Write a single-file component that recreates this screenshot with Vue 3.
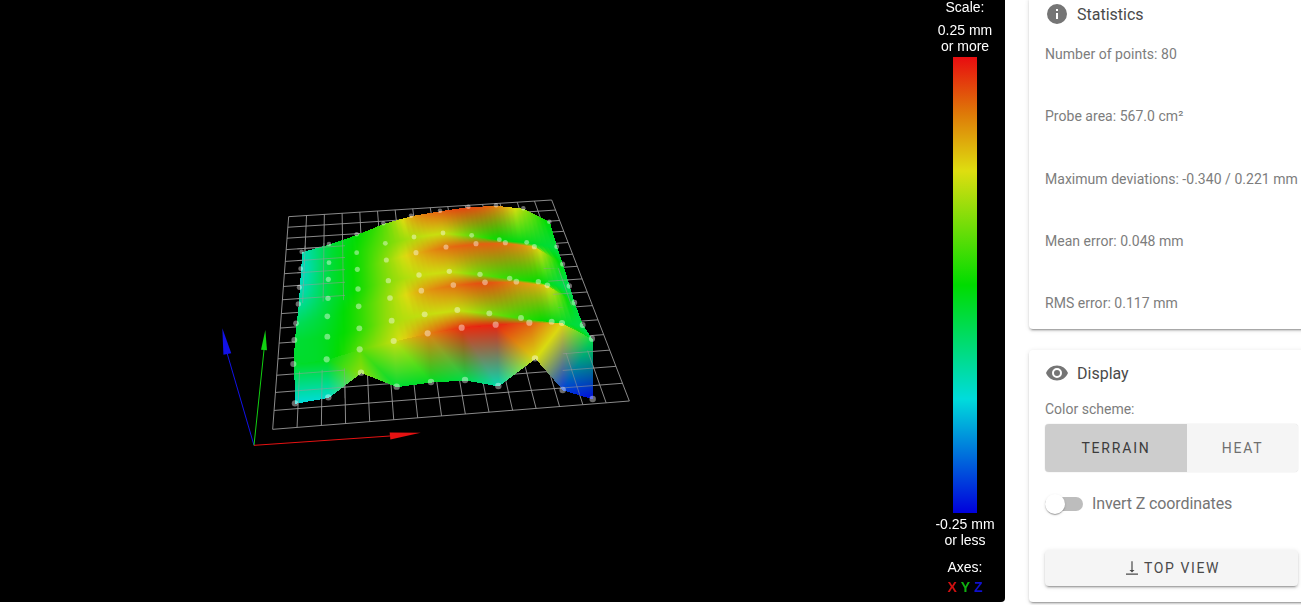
<script setup>
import { onMounted, ref } from 'vue'

const mesh = ref(null)

const stats = [
  'Number of points: 80',
  'Probe area: 567.0 cm²',
  'Maximum deviations: -0.340 / 0.221 mm',
  'Mean error: 0.048 mm',
  'RMS error: 0.117 mm'
]

// probe points as seen on screen, front row first, [x, y, height 0..1]
const rows = [
  [[255,640,.25],[355,622,.27],[453,548,.66],[560,590,.44],[663,576,.46],[765,570,.42],[865,588,.3],[975,505,.74],[1058,600,.07],[1148,627,.01]],
  [[250,522,.45],[350,508,.47],[449,478,.6],[551,453,.72],[653,430,.86],[755,413,.96],[857,404,.97],[958,398,.9],[1056,399,.76],[1146,446,.42]],
  [[253,450,.44],[352,440,.47],[448,415,.55],[545,392,.68],[644,373,.72],[742,360,.72],[838,370,.64],[933,384,.56],[1025,395,.48],[1118,405,.42]],
  [[258,400,.4],[352,379,.45],[446,349,.55],[540,324,.68],[634,302,.82],[730,285,.88],[825,277,.92],[919,275,.85],[1012,286,.76],[1093,338,.42]],
  [[265,342,.33],[354,325,.43],[444,297,.52],[535,272,.65],[627,255,.72],[718,244,.72],[810,253,.62],[899,265,.55],[985,275,.5],[1078,288,.4]],
  [[268,292,.29],[355,268,.43],[442,238,.52],[529,210,.66],[618,188,.8],[708,171,.88],[798,161,.9],[886,158,.88],[973,170,.78],[1058,222,.46]],
  [[272,236,.28],[357,218,.43],[440,188,.52],[526,160,.62],[612,141,.7],[699,129,.72],[785,136,.6],[868,149,.5],[950,157,.47],[1040,170,.43]],
  [[275,185,.3],[357,162,.43],[440,133,.5],[520,100,.6],[603,77,.82],[690,62,.9],[775,50,.93],[858,46,.86],[940,55,.68],[1018,95,.48]]
]

const ramp = [[0,0,220],[0,220,220],[0,220,0],[222,222,16],[232,12,16]]

const colorAt = (t) => {
  const p = Math.max(0, Math.min(t * 4, 3.999))
  const i = Math.floor(p)
  return ramp[i].map((v, k) => v + (ramp[i + 1][k] - v) * (p - i))
}

const px = ([x, y]) => [210 + x / 3, 190 + y / 3]

// point on a row between two columns, the height eased so no facets show
const along = (row, c, u) => {
  const p0 = row[Math.max(c - 1, 0)][2]
  const p1 = row[c][2]
  const p2 = row[c + 1][2]
  const p3 = row[Math.min(c + 2, row.length - 1)][2]
  const t = 0.5 * (2 * p1 + (p2 - p0) * u + (2 * p0 - 5 * p1 + 4 * p2 - p3) * u * u + (3 * p1 - p0 - 3 * p2 + p3) * u * u * u)
  return [row[c][0] + (row[c + 1][0] - row[c][0]) * u, row[c][1] + (row[c + 1][1] - row[c][1]) * u, t]
}

const fillTriangle = (img, a, b, c) => {
  const [ax, ay] = px(a)
  const [bx, by] = px(b)
  const [cx, cy] = px(c)
  const ca = colorAt(a[2])
  const cb = colorAt(b[2])
  const cc = colorAt(c[2])
  const area = (bx - ax) * (cy - ay) - (cx - ax) * (by - ay)
  if (!area) return
  for (let y = Math.floor(Math.min(ay, by, cy)); y <= Math.ceil(Math.max(ay, by, cy)); y++) {
    for (let x = Math.floor(Math.min(ax, bx, cx)); x <= Math.ceil(Math.max(ax, bx, cx)); x++) {
      const w1 = ((x - ax) * (cy - ay) - (cx - ax) * (y - ay)) / area
      const w2 = ((bx - ax) * (y - ay) - (x - ax) * (by - ay)) / area
      const w0 = 1 - w1 - w2
      if (w0 < 0 || w1 < 0 || w2 < 0) continue
      const o = (y * img.width + x) * 4
      for (let k = 0; k < 3; k++) img.data[o + k] = ca[k] * w0 + cb[k] * w1 + cc[k] * w2
      img.data[o + 3] = 255
    }
  }
}

// maps the unit square onto the grid's four corners
const plane = (q) => {
  const [[x0, y0], [x1, y1], [x2, y2], [x3, y3]] = q
  const sx = x0 - x1 + x2 - x3
  const sy = y0 - y1 + y2 - y3
  const dx1 = x1 - x2
  const dx2 = x3 - x2
  const dy1 = y1 - y2
  const dy2 = y3 - y2
  const den = dx1 * dy2 - dx2 * dy1
  const g = (sx * dy2 - dx2 * sy) / den
  const h = (dx1 * sy - sx * dy1) / den
  return (u, v) => {
    const w = g * u + h * v + 1
    return [
      ((x1 - x0 + g * x1) * u + (x3 - x0 + h * x3) * v + x0) / w,
      ((y1 - y0 + g * y1) * u + (y3 - y0 + h * y3) * v + y0) / w
    ]
  }
}

const drawGrid = (ctx) => {
  const at = plane([[236,80],[1025,30],[1258,633],[188,718]].map(px))
  ctx.strokeStyle = '#9a9a9a'
  ctx.lineWidth = 0.9
  ctx.beginPath()
  for (let i = 0; i <= 15; i++) {
    ctx.moveTo(...at(i / 15, 0))
    ctx.lineTo(...at(i / 15, 1))
    ctx.moveTo(...at(0, i / 15))
    ctx.lineTo(...at(1, i / 15))
  }
  ctx.stroke()
}

const drawAxis = (ctx, color, tip, base, width) => {
  const origin = px([132, 766])
  const t = px(tip)
  const b = px(base)
  const len = Math.hypot(t[0] - b[0], t[1] - b[1])
  const nx = (t[1] - b[1]) / len * width
  const ny = (b[0] - t[0]) / len * width
  ctx.strokeStyle = color
  ctx.fillStyle = color
  ctx.lineWidth = 1
  ctx.beginPath()
  ctx.moveTo(...origin)
  ctx.lineTo(...b)
  ctx.stroke()
  ctx.beginPath()
  ctx.moveTo(...t)
  ctx.lineTo(b[0] + nx, b[1] + ny)
  ctx.lineTo(b[0] - nx, b[1] - ny)
  ctx.fill()
}

onMounted(() => {
  const ctx = mesh.value.getContext('2d')
  const { width, height } = mesh.value
  drawGrid(ctx)

  const img = ctx.createImageData(width, height)
  const steps = 6
  for (let r = rows.length - 2; r >= 0; r--) {
    for (let c = 0; c < 9; c++) {
      if (r === 0) {
        // the front row keeps its hard facets, they fan out from the notch
        const a = rows[0][c]
        const b = rows[0][c + 1]
        const d = rows[1][c]
        const e = rows[1][c + 1]
        if (c >= 7) {
          fillTriangle(img, a, e, d)
          fillTriangle(img, a, b, e)
        } else {
          fillTriangle(img, b, d, a)
          fillTriangle(img, b, e, d)
        }
        continue
      }
      for (let s = 0; s < steps; s++) {
        const a = along(rows[r], c, s / steps)
        const b = along(rows[r], c, (s + 1) / steps)
        const d = along(rows[r + 1], c, s / steps)
        const e = along(rows[r + 1], c, (s + 1) / steps)
        fillTriangle(img, b, d, a)
        fillTriangle(img, b, e, d)
      }
    }
  }
  const layer = document.createElement('canvas')
  layer.width = width
  layer.height = height
  layer.getContext('2d').putImageData(img, 0, 0)
  ctx.filter = 'blur(0.6px)'
  ctx.drawImage(layer, 0, 0)
  ctx.filter = 'none'

  // parts of the grid that stick out above the surface
  const above = [
    [[262,170],[405,150],[405,330],[262,340]],
    [[255,545],[405,535],[405,625],[255,640]],
    [[1058,490],[1150,480],[1150,625],[1058,600]],
    [[1000,235],[1070,235],[1090,345],[1045,355]]
  ]
  ctx.save()
  ctx.beginPath()
  for (const zone of above) {
    zone.map(px).forEach((p, i) => (i ? ctx.lineTo(...p) : ctx.moveTo(...p)))
    ctx.closePath()
  }
  ctx.clip()
  ctx.globalAlpha = 0.6
  drawGrid(ctx)
  ctx.restore()

  rows.forEach((row, r) => {
    ctx.fillStyle = 'rgba(255, 255, 255, 0.42)'
    row.forEach((p) => {
      ctx.beginPath()
      ctx.arc(...px(p), 3.2 - r * 0.13, 0, Math.PI * 2)
      ctx.fill()
    })
  })

  drawAxis(ctx, '#1212e6', [37, 415], [52, 492], 4)
  drawAxis(ctx, '#12d012', [166, 420], [162, 480], 3)
  drawAxis(ctx, '#e61212', [632, 728], [540, 738], 3.5)
})
</script>

<template>
  <div class="page">
    <div class="viewer">
      <canvas ref="mesh" class="mesh" width="1005" height="602"></canvas>
      <div class="legend">
        <div class="legend-title">Scale:</div>
        <div class="legend-label">0.25 mm<br>or more</div>
        <div class="bar"></div>
        <div class="legend-label">-0.25 mm<br>or less</div>
        <div class="axes-title">Axes:</div>
        <div class="axes">
          <span class="x">X</span>
          <span class="y">Y</span>
          <span class="z">Z</span>
        </div>
      </div>
    </div>

    <div class="side">
      <section class="card stats-card">
        <h3 class="card-title">
          <svg class="icon" viewBox="0 0 24 24"><path d="M13,9H11V7H13M13,17H11V11H13M12,2A10,10 0 0,0 2,12A10,10 0 0,0 12,22A10,10 0 0,0 22,12A10,10 0 0,0 12,2Z" /></svg>
          Statistics
        </h3>
        <div class="stats">
          <p v-for="line in stats" :key="line">{{ line }}</p>
        </div>
      </section>

      <section class="card display-card">
        <h3 class="card-title">
          <svg class="icon" viewBox="0 0 24 24"><path d="M12,9A3,3 0 0,0 9,12A3,3 0 0,0 12,15A3,3 0 0,0 15,12A3,3 0 0,0 12,9M12,17A5,5 0 0,1 7,12A5,5 0 0,1 12,7A5,5 0 0,1 17,12A5,5 0 0,1 12,17M12,4.5C7,4.5 2.73,7.61 1,12C2.73,16.39 7,19.5 12,19.5C17,19.5 21.27,16.39 23,12C21.27,7.61 17,4.5 12,4.5Z" /></svg>
          Display
        </h3>
        <div class="body">
          <div class="field-label">Color scheme:</div>
          <div class="toggle">
            <button class="active">Terrain</button>
            <button>Heat</button>
          </div>
          <div class="switch-row">
            <span class="switch"><span class="thumb"></span></span>
            <span class="switch-label">Invert Z coordinates</span>
          </div>
          <button class="top-view">
            <svg viewBox="0 0 24 24"><path d="M12.8,3V14.6H15.4L12,18L8.6,14.6H11.2V3H12.8M4,21V19.4H20V21H4Z" /></svg>
            Top view
          </button>
        </div>
      </section>
    </div>
  </div>
</template>

<style scoped>
.page {
  display: flex;
  align-items: flex-start;
  gap: 24px;
  height: 605px;
  overflow: hidden;
  font-family: Roboto, sans-serif;
}

.viewer {
  position: relative;
  flex: none;
  display: flex;
  justify-content: flex-end;
  width: 1005px;
  height: 602px;
  background: #000;
  border-bottom-right-radius: 4px;
  overflow: hidden;
}

.mesh {
  position: absolute;
  top: 0;
  left: 0;
}

.legend {
  position: relative;
  display: flex;
  flex-direction: column;
  align-items: center;
  width: 70px;
  margin: -1px 5px 0 0;
  color: #fff;
  font: 14px/16px "Liberation Sans", Arial, sans-serif;
  text-align: center;
}

.legend-label {
  margin-top: 7px;
}

.bar {
  flex: none;
  width: 24px;
  height: 456px;
  margin-top: 3px;
  margin-bottom: -4px;
  background: linear-gradient(#e80c10, #de7a08 12.5%, #dede10 25%, #00dc00 50%, #00dcdc 75%, #0000dc);
}

.axes-title {
  margin-top: 11px;
}

.axes {
  display: flex;
  gap: 4px;
  margin-top: 4px;
  font-weight: 700;
}

.x { color: #d01010; }
.y { color: #10b010; }
.z { color: #1010d0; }

.side {
  flex: none;
  width: 285px;
  display: flex;
  flex-direction: column;
  gap: 21px;
  margin-top: -3px;
}

.card {
  background: #fff;
  border-radius: 4px;
  padding: 0 16px;
  box-shadow: 0 3px 1px -2px rgba(0, 0, 0, 0.2), 0 2px 2px rgba(0, 0, 0, 0.14), 0 1px 5px rgba(0, 0, 0, 0.12);
}

.stats-card {
  height: 332px;
}

.display-card {
  height: 252px;
}

.card-title {
  display: flex;
  align-items: center;
  gap: 8px;
  margin: 0;
  height: 34px;
  font-size: 16px;
  font-weight: 400;
  color: #4a4a4a;
}

.display-card .card-title {
  height: 46px;
}

.icon {
  width: 24px;
  height: 24px;
  fill: #757575;
}

.stats {
  display: flex;
  flex-direction: column;
  gap: 46px;
  padding-top: 15px;
}

.stats p {
  margin: 0;
  font-size: 14px;
  line-height: 16.25px;
  letter-spacing: 0.03px;
  color: #7d7d7d;
  white-space: nowrap;
}

.body {
  display: flex;
  flex-direction: column;
}

.field-label {
  margin-top: 3px;
  font-size: 14px;
  line-height: 20px;
  color: #7d7d7d;
}

.toggle {
  display: flex;
  width: 253px;
  height: 48px;
  margin-top: 5px;
  border-radius: 4px;
  overflow: hidden;
  box-shadow: 0 0 1px rgba(0, 0, 0, 0.3);
}

.toggle button {
  border: none;
  background: #f5f5f5;
  color: #6f6f6f;
  font: 14px Roboto, sans-serif;
  letter-spacing: 1.8px;
  text-transform: uppercase;
  flex: 1;
}

.toggle button.active {
  flex: none;
  width: 142px;
  background: #cdcdcd;
  color: #3c3c3c;
}

.switch-row {
  display: flex;
  align-items: center;
  gap: 9px;
  height: 24px;
  margin-top: 20px;
}

.switch {
  position: relative;
  width: 38px;
  height: 14px;
  border-radius: 7px;
  background: #bdbdbd;
}

.thumb {
  position: absolute;
  top: -3px;
  left: 0;
  width: 20px;
  height: 20px;
  border-radius: 50%;
  background: #fff;
  box-shadow: 0 2px 1px -1px rgba(0, 0, 0, 0.2), 0 1px 1px rgba(0, 0, 0, 0.14), 0 1px 3px rgba(0, 0, 0, 0.12);
}

.switch-label {
  margin-top: -2px;
  font-size: 16px;
  letter-spacing: -0.1px;
  color: #757575;
}

.top-view {
  display: flex;
  align-items: center;
  justify-content: center;
  gap: 3px;
  width: 253px;
  height: 36px;
  margin-top: 34px;
  padding: 0;
  border: none;
  border-radius: 4px;
  background: #f5f5f5;
  color: #4a4a4a;
  font: 14px Roboto, sans-serif;
  letter-spacing: 1.6px;
  text-transform: uppercase;
  box-shadow: 0 3px 1px -2px rgba(0, 0, 0, 0.2), 0 2px 2px rgba(0, 0, 0, 0.14), 0 1px 5px rgba(0, 0, 0, 0.12);
}

.top-view svg {
  width: 18px;
  height: 18px;
  fill: #4a4a4a;
}
</style>

<style>
html, body {
  background: #fff;
  overflow: hidden;
}
</style>
